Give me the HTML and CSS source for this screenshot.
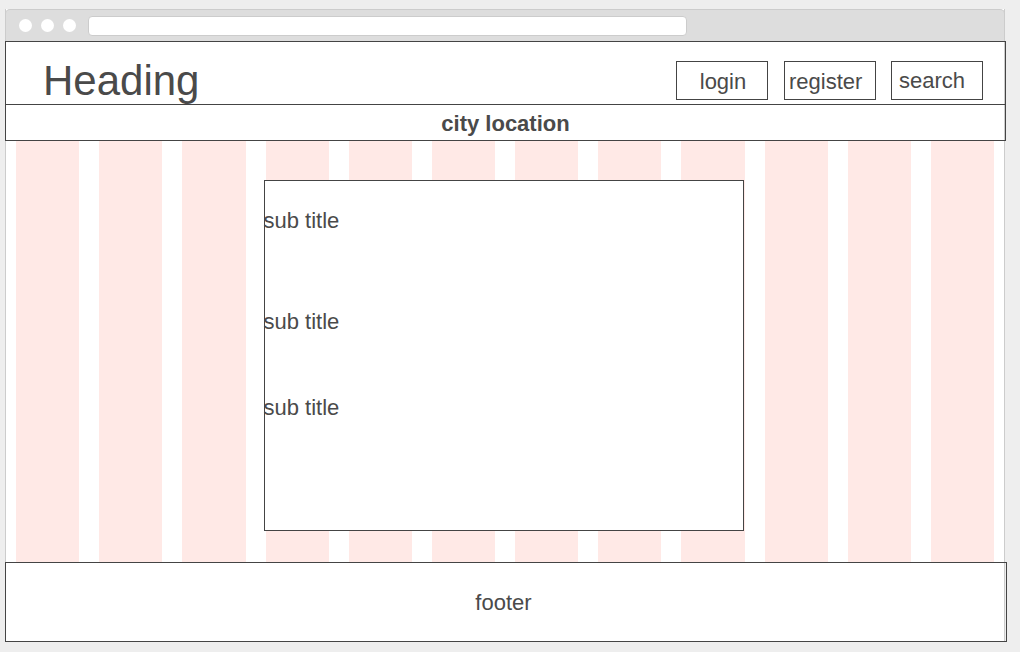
FILE: index.html
```html
<!DOCTYPE html>
<html>
<head>
    <meta charset="utf-8">
    <link rel="stylesheet" href="styles.css">
</head>
<body>

    <div class="window">

        <!-- browser chrome -->
        <div class="titlebar">
            <span class="dot"></span>
            <span class="dot"></span>
            <span class="dot"></span>
            <div class="address"></div>
        </div>

        <div class="header">
            <div class="topbar">
                <h1 class="heading">Heading</h1>
                <div class="nav">
                    <a class="btn" href="#">login</a>
                    <a class="btn btn-left" href="#">register</a>
                    <a class="btn btn-left btn-search" href="#">search</a>
                </div>
            </div>
            <div class="city">city location</div>
        </div>

        <div class="grid">
            <!-- column guides -->
            <div class="cols">
                <div class="col"></div>
                <div class="col"></div>
                <div class="col"></div>
                <div class="col"></div>
                <div class="col"></div>
                <div class="col"></div>
                <div class="col"></div>
                <div class="col"></div>
                <div class="col"></div>
                <div class="col"></div>
                <div class="col"></div>
                <div class="col"></div>
            </div>

            <div class="panel">
                <h3 class="sub first">sub title</h3>
                <h3 class="sub second">sub title</h3>
                <h3 class="sub third">sub title</h3>
            </div>
        </div>

        <div class="footer">footer</div>

    </div>

</body>
</html>
```

FILE: styles.css
```css
    body {
        margin: 0;
        background: #eeeeee;
        color: #4a4a4a;
        font-family: "Liberation Sans", Arial, sans-serif;
    }

    .window {
        width: 1000px;
        margin: 9px 0 0 5px;
        box-sizing: border-box;
        border-left: 1px solid #cccccc;
        border-right: 1px solid #cccccc;
        background: #ffffff;
    }

    /* Browser chrome */

    .titlebar {
        height: 31px;
        margin: 0 -1px;
        display: flex;
        align-items: center;
        padding-left: 13px;
        background: #dddddd;
        border: 1px solid #cccccc;
        border-bottom: none;
        border-radius: 5px 5px 0 0;
    }

    .dot {
        width: 13px;
        height: 13px;
        margin-right: 9px;
        border-radius: 50%;
        background: #ffffff;
    }

    .address {
        width: 597px;
        height: 18px;
        margin-left: 3px;
        background: #ffffff;
        border: 1px solid #cccccc;
        border-radius: 4px;
    }

    /* Header */

    .header {
        margin: 0 -2px 0 -1px;
        border: 1px solid #444444;
    }

    .topbar {
        height: 62px;
        display: flex;
        justify-content: space-between;
        align-items: flex-start;
        padding: 0 22px 0 38px;
        box-sizing: border-box;
    }

    .heading {
        margin: 18px 0 0 -1px;
        font-size: 42px;
        line-height: 42px;
        font-weight: normal;
    }

    .nav {
        display: flex;
        gap: 15px;
        margin-top: 19px;
    }

    .btn {
        width: 92px;
        height: 39px;
        box-sizing: border-box;
        border: 1px solid #444444;
        font-size: 22px;
        line-height: 39px;
        text-align: center;
        text-decoration: none;
        color: #4a4a4a;
    }

    .btn-left {
        text-align: left;
        padding-left: 4px;
    }

    .btn-search {
        padding-left: 7px;
        line-height: 37px;
    }

    .nav .btn:first-child {
        margin-right: 1px;
        padding-left: 2px;
    }

    .city {
        height: 35px;
        border-top: 1px solid #444444;
        font-size: 22px;
        font-weight: bold;
        line-height: 37px;
        text-align: center;
    }

    /* 12 column grid */

    .grid,
    .cols {
        display: grid;
        grid-template-columns: repeat(12, 1fr);
        column-gap: 20px;
    }

    .grid {
        height: 421px;
        padding: 0 10px;
    }

    .cols {
        grid-row: 1;
        grid-column: 1 / -1;
    }

    .col {
        background: #ffe9e6;
    }

    .panel {
        grid-row: 1;
        grid-column: 4 / 10;
        align-self: start;
        height: 351px;
        margin: 39px 1px 0 -2px;
        box-sizing: border-box;
        border: 1px solid #444444;
        background: #ffffff;
    }

    .sub {
        margin: 0;
        font-size: 22px;
        font-weight: normal;
        line-height: 25px;
        margin-left: -1px;
    }

    .first { margin-top: 27px; }
    .second { margin-top: 76px; }
    .third { margin-top: 61px; }

    /* Footer */

    .footer {
        height: 80px;
        margin: 0 -3px 0 -1px;
        padding-right: 5px;
        box-sizing: border-box;
        border: 1px solid #444444;
        font-size: 22px;
        line-height: 79px;
        text-align: center;
    }
```
